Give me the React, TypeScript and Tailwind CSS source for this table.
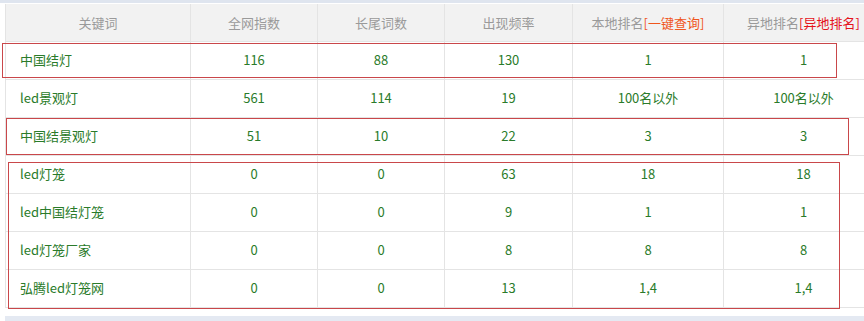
const rows = [
  ["中国结灯", "116", "88", "130", "1", "1"],
  ["led景观灯", "561", "114", "19", "100名以外", "100名以外"],
  ["中国结景观灯", "51", "10", "22", "3", "3"],
  ["led灯笼", "0", "0", "63", "18", "18"],
  ["led中国结灯笼", "0", "0", "9", "1", "1"],
  ["led灯笼厂家", "0", "0", "8", "8", "8"],
  ["弘腾led灯笼网", "0", "0", "13", "1,4", "1,4"],
];

const widths = ["w-[185px]", "w-[127px]", "w-[127px]", "w-[128px]", "w-[151px]", "w-[160px]"];

export default function App() {
  return (
    <div
      className="relative w-[864px] h-[321px] overflow-hidden bg-white"
      style={{ fontFamily: '"Noto Sans CJK SC", "Liberation Sans", sans-serif' }}
    >
      <div className="h-[3px] bg-[#dfe5ef]" />
      <div className="pl-[5px] pt-[1px]">
        <table className="border-collapse table-fixed w-[878px] text-[13px]">
          <thead>
            <tr className="h-[37px] bg-[#f2f2f2] text-[#9a9a9a]">
              <th className={`${widths[0]} font-normal border-l border-r border-[#e4e4e4]`}>关键词</th>
              <th className={`${widths[1]} font-normal border-r border-[#e4e4e4]`}>全网指数</th>
              <th className={`${widths[2]} font-normal border-r border-[#e4e4e4]`}>长尾词数</th>
              <th className={`${widths[3]} font-normal border-r border-[#e4e4e4]`}>出现频率</th>
              <th className={`${widths[4]} font-normal border-r border-[#e4e4e4]`}>
                本地排名<span className="text-[#f0561d]">[一键查询]</span>
              </th>
              <th className={`${widths[5]} font-normal border-r border-[#e4e4e4]`}>
                异地排名<span className="text-[#e5131b]">[异地排名]</span>
              </th>
            </tr>
          </thead>
          <tbody className="text-[#2a7b2a]">
            {rows.map((r, i) => (
              <tr key={i} className="h-[38px] border-t border-b border-[#e4e4e4]">
                <td className="pl-[14px] border-l border-r border-[#e4e4e4]">{r[0]}</td>
                {r.slice(1).map((c, j) => (
                  <td key={j} className="text-center border-r border-[#e4e4e4]">
                    {c}
                  </td>
                ))}
              </tr>
            ))}
          </tbody>
        </table>
      </div>
      <div className="ml-[5px] mt-[8px] h-[6px] bg-[#e4e9f2]" />

      {/* red highlight frames */}
      <div className="absolute left-[2px] top-[43px] w-[835px] h-[35px] border border-[#c9474a]" />
      <div className="absolute left-[6px] top-[118px] w-[843px] h-[37px] border border-[#c9474a]" />
      <div className="absolute left-[8px] top-[162px] w-[832px] h-[147px] border border-[#c9474a]" />
    </div>
  );
}
